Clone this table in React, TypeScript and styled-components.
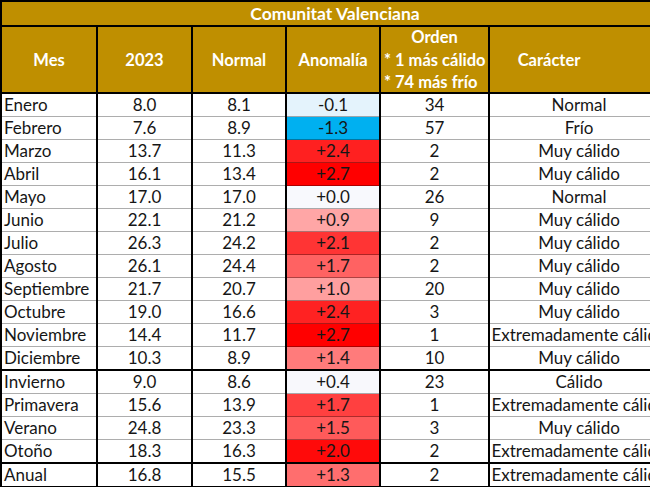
import React from 'react';
import styled, { createGlobalStyle } from 'styled-components';

const GlobalStyle = createGlobalStyle`
  html, body {
    margin: 0;
    padding: 0;
    background: #ffffff;
    overflow: hidden;
  }
  body {
    font-family: Lato, "Noto Sans", sans-serif;
  }
`;

const GOLD = '#bf8f00';
const GRID = 'rgba(0, 0, 0, 0.32)';

const Table = styled.table`
  border-collapse: collapse;
  table-layout: fixed;
  width: 668px;
  font-size: 17px;
  color: #161616;
`;

const TitleCell = styled.th`
  background: ${GOLD};
  color: #fff;
  font-weight: 700;
  font-size: 17.5px;
  height: 23px;
  line-height: 22px;
  padding: 0;
  text-align: center;
  border: 2px solid #000;
`;

const HeadCell = styled.th<{ $padRight?: number }>`
  background: ${GOLD};
  color: #fff;
  font-weight: 700;
  font-size: 16.5px;
  height: 65px;
  padding: 0 ${(p) => p.$padRight ?? 0}px 0 0;
  text-align: center;
  border: 2px solid #000;
`;

const OrdenHead = styled.div`
  display: flex;
  flex-direction: column;
  justify-content: space-between;
  height: 65px;
  line-height: 20px;
`;

const OrdenLine = styled.span<{ $left?: boolean }>`
  text-align: ${(p) => (p.$left ? 'left' : 'center')};
  padding-left: ${(p) => (p.$left ? '3px' : '0')};
  white-space: nowrap;
`;

const Row = styled.tr<{ $thick?: boolean }>`
  height: 23px;
  & > td {
    border-top: ${(p) => (p.$thick ? '2px solid #000' : `1px solid ${GRID}`)};
  }
`;

const Cell = styled.td<{ $align?: 'left' | 'center'; $bg?: string }>`
  padding: ${(p) => (p.$align === 'left' ? '0 0 0 2px' : '0')};
  text-align: ${(p) => p.$align ?? 'center'};
  background: ${(p) => p.$bg ?? 'transparent'};
  border-left: 2px solid #000;
  border-right: 2px solid #000;
  border-bottom: 1px solid ${GRID};
  line-height: 22px;
  white-space: nowrap;
  overflow: visible;
`;

const LastRow = styled(Row)`
  & > td {
    border-bottom: 2px solid #000;
  }
`;

type Dato = {
  mes: string;
  y2023: string;
  normal: string;
  anomalia: string;
  color: string;
  orden: string;
  caracter: string;
  thick?: boolean;
};

const datos: Dato[] = [
  { mes: 'Enero', y2023: '8.0', normal: '8.1', anomalia: '-0.1', color: '#e4f3fc', orden: '34', caracter: 'Normal' },
  { mes: 'Febrero', y2023: '7.6', normal: '8.9', anomalia: '-1.3', color: '#00b0f0', orden: '57', caracter: 'Frío' },
  { mes: 'Marzo', y2023: '13.7', normal: '11.3', anomalia: '+2.4', color: '#ff2020', orden: '2', caracter: 'Muy cálido' },
  { mes: 'Abril', y2023: '16.1', normal: '13.4', anomalia: '+2.7', color: '#ff0000', orden: '2', caracter: 'Muy cálido' },
  { mes: 'Mayo', y2023: '17.0', normal: '17.0', anomalia: '+0.0', color: '#f8f9fd', orden: '26', caracter: 'Normal' },
  { mes: 'Junio', y2023: '22.1', normal: '21.2', anomalia: '+0.9', color: '#ffa6a6', orden: '9', caracter: 'Muy cálido' },
  { mes: 'Julio', y2023: '26.3', normal: '24.2', anomalia: '+2.1', color: '#ff3434', orden: '2', caracter: 'Muy cálido' },
  { mes: 'Agosto', y2023: '26.1', normal: '24.4', anomalia: '+1.7', color: '#ff6262', orden: '2', caracter: 'Muy cálido' },
  { mes: 'Septiembre', y2023: '21.7', normal: '20.7', anomalia: '+1.0', color: '#ff9f9f', orden: '20', caracter: 'Muy cálido' },
  { mes: 'Octubre', y2023: '19.0', normal: '16.6', anomalia: '+2.4', color: '#ff2222', orden: '3', caracter: 'Muy cálido' },
  { mes: 'Noviembre', y2023: '14.4', normal: '11.7', anomalia: '+2.7', color: '#ff0000', orden: '1', caracter: 'Extremadamente cálido' },
  { mes: 'Diciembre', y2023: '10.3', normal: '8.9', anomalia: '+1.4', color: '#ff7b7b', orden: '10', caracter: 'Muy cálido' },
  { mes: 'Invierno', y2023: '9.0', normal: '8.6', anomalia: '+0.4', color: '#f8f8fc', orden: '23', caracter: 'Cálido', thick: true },
  { mes: 'Primavera', y2023: '15.6', normal: '13.9', anomalia: '+1.7', color: '#ff4040', orden: '1', caracter: 'Extremadamente cálido' },
  { mes: 'Verano', y2023: '24.8', normal: '23.3', anomalia: '+1.5', color: '#ff5a5a', orden: '3', caracter: 'Muy cálido' },
  { mes: 'Otoño', y2023: '18.3', normal: '16.3', anomalia: '+2.0', color: '#ff0a0a', orden: '2', caracter: 'Extremadamente cálido' },
  { mes: 'Anual', y2023: '16.8', normal: '15.5', anomalia: '+1.3', color: '#ff6e6e', orden: '2', caracter: 'Extremadamente cálido', thick: true },
];

const FilaDato: React.FC<{ d: Dato; last: boolean }> = ({ d, last }) => {
  const RowComp = last ? LastRow : Row;
  return (
    <RowComp $thick={d.thick}>
      <Cell $align="left">{d.mes}</Cell>
      <Cell>{d.y2023}</Cell>
      <Cell>{d.normal}</Cell>
      <Cell $bg={d.color}>{d.anomalia}</Cell>
      <Cell>{d.orden}</Cell>
      <Cell>{d.caracter}</Cell>
    </RowComp>
  );
};

const App: React.FC = () => (
  <>
    <GlobalStyle />
    <Table>
      <colgroup>
        <col style={{ width: 96 }} />
        <col style={{ width: 95 }} />
        <col style={{ width: 94 }} />
        <col style={{ width: 94 }} />
        <col style={{ width: 109 }} />
        <col style={{ width: 180 }} />
      </colgroup>
      <thead>
        <tr>
          <TitleCell colSpan={6}>Comunitat Valenciana</TitleCell>
        </tr>
        <tr>
          <HeadCell>Mes</HeadCell>
          <HeadCell>2023</HeadCell>
          <HeadCell>Normal</HeadCell>
          <HeadCell>Anomalía</HeadCell>
          <HeadCell>
            <OrdenHead>
              <OrdenLine>Orden</OrdenLine>
              <OrdenLine $left>* 1 más cálido</OrdenLine>
              <OrdenLine $left>* 74 más frío</OrdenLine>
            </OrdenHead>
          </HeadCell>
          <HeadCell $padRight={60}>Carácter</HeadCell>
        </tr>
      </thead>
      <tbody>
        {datos.map((d, i) => (
          <FilaDato key={d.mes} d={d} last={i === datos.length - 1} />
        ))}
      </tbody>
    </Table>
  </>
);

export default App;
